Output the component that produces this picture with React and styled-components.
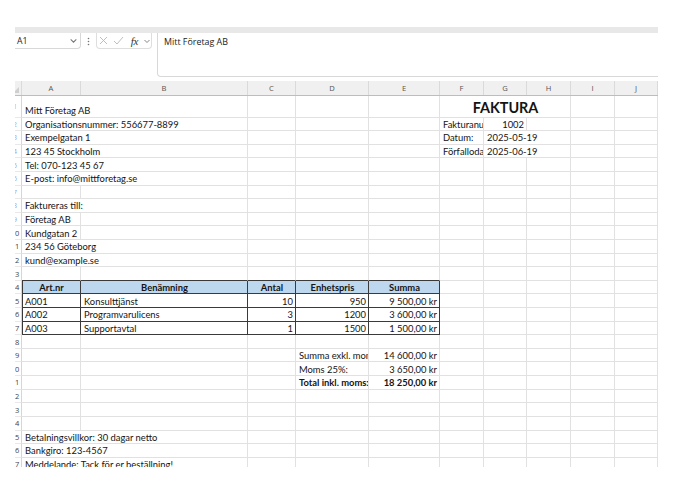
import React from 'react';
import styled, { createGlobalStyle, css } from 'styled-components';

const Global = createGlobalStyle`
  html, body { margin: 0; padding: 0; background: #fff; }
  body { width: 691px; height: 488px; overflow: hidden; font-family: Lato, "Liberation Sans", sans-serif; }
`;

const COLS = '22px 59px 167px 48px 73px 71px 44px 43px 44px 44px 43px';
const LETTERS = ['A', 'B', 'C', 'D', 'E', 'F', 'G', 'H', 'I', 'J'];
const GRID = '#e1e1e1';
const DARK = '#3a3a3a';

const Viewport = styled.div`
  margin: 27px 0 0 15px;
  width: 643px;
  height: 440px;
  overflow: hidden;
`;

const Window = styled.div`
  margin-left: -15px;
  width: 700px;
`;

const Stripe = styled.div`
  height: 6px;
  background: #e8e8e8;
`;

const FormulaRow = styled.div`
  display: flex;
  align-items: flex-start;
  height: 48px;
  font-family: "Open Sans", "Noto Sans", sans-serif;
`;

const NameBox = styled.div`
  margin-left: 6px;
  width: 75px;
  height: 16px;
  box-sizing: border-box;
  border: 1px solid #d8d8d8;
  border-top: none;
  border-radius: 0 0 4px 4px;
  display: flex;
  align-items: center;
  justify-content: space-between;
  padding: 0 2px 0 10px;
  font-size: 8.7px;
  color: #222;
`;

const Dots = styled.div`
  width: 15px;
  height: 16px;
  display: flex;
  align-items: center;
  justify-content: center;
`;

const FxBox = styled.div`
  width: 56px;
  height: 16px;
  box-sizing: border-box;
  border: 1px solid #dedede;
  border-top: none;
  border-radius: 0 0 4px 4px;
  display: flex;
  align-items: center;
`;

const IconSlot = styled.span`
  display: flex;
  align-items: center;
  justify-content: center;
  width: ${p => p.$w}px;
`;

const Fx = styled.span`
  font-family: "Liberation Serif", serif;
  font-style: italic;
  font-size: 11px;
  color: #333;
  width: 16px;
  text-align: center;
  letter-spacing: -0.3px;
`;

const FormulaBox = styled.div`
  margin-left: 5px;
  flex: 1;
  height: 44px;
  box-sizing: border-box;
  border: 1px solid #d8d8d8;
  border-top: none;
  border-radius: 0 0 4px 4px;
  padding: 2px 6px;
  font-size: 8.9px;
  color: #222;
  line-height: 14px;
`;

const Line = styled.div`
  display: grid;
  grid-template-columns: ${COLS};
  height: ${p => p.$h}px;
`;

const HeadLine = styled(Line)`
  background: #f0f0f0;
  border-bottom: 1px solid #bdbdbd;
  box-sizing: border-box;
  font-family: "Open Sans", "Noto Sans", sans-serif;
`;

const ColHead = styled.div`
  border-right: 1px solid #dadada;
  display: flex;
  align-items: center;
  justify-content: center;
  font-size: 7.6px;
  color: #555;
`;

const Corner = styled.div`
  border-right: 1px solid #dadada;
  display: flex;
  align-items: flex-end;
  justify-content: flex-end;
  padding: 0 2px 2px 0;
`;

const RowHead = styled.div`
  box-sizing: border-box;
  border-right: 1px solid #d6d6d6;
  border-bottom: 1px solid #e8e8e8;
  overflow: hidden;
  display: flex;
  align-items: center;
  font-family: "Open Sans", "Noto Sans", sans-serif;
`;

const Num = styled.span`
  flex: none;
  width: 30px;
  text-align: center;
  font-size: 7.5px;
  color: ${p => (p.$faint ? '#8fb0dc' : '#444')};
`;

const Cell = styled.div`
  grid-column: span ${p => p.$span || 1};
  box-sizing: border-box;
  border-right: 1px solid ${p => p.$rc || GRID};
  border-bottom: 1px solid ${p => p.$bc || GRID};
  ${p => p.$left && css`box-shadow: inset 1px 0 ${DARK};`}
  background: ${p => p.$fill || 'transparent'};
  display: flex;
  align-items: ${p => (p.$bottom ? 'flex-end' : 'center')};
  justify-content: ${p => (p.$align === 'right' ? 'flex-end' : p.$align === 'center' ? 'center' : 'flex-start')};
  padding: ${p => (p.$bottom ? '0 2px 1px 3px' : '1px 2px 0 3px')};
  font-size: ${p => p.$size || 9.4}px;
  font-weight: ${p => (p.$bold ? 700 : 400)};
  white-space: nowrap;
  overflow: hidden;
  color: #141414;
`;

const Chevron = ({ size = 7 }) => (
  <svg width={size} height={size} viewBox="0 0 8 8">
    <polyline points="1.5,3 4,5.5 6.5,3" fill="none" stroke="#777" strokeWidth="0.9" />
  </svg>
);

const DATA = {
  1: { 0: { t: 'Mitt Företag AB', span: 2 }, 5: { t: 'FAKTURA', span: 3, align: 'center', bold: true, size: 14.4 } },
  2: { 0: { t: 'Organisationsnummer: 556677-8899', span: 2 }, 5: { t: 'Fakturanummer:' }, 6: { t: '1002', align: 'right' } },
  3: { 0: { t: 'Exempelgatan 1', span: 2 }, 5: { t: 'Datum:' }, 6: { t: '2025-05-19', span: 2 } },
  4: { 0: { t: '123 45 Stockholm', span: 2 }, 5: { t: 'Förfallodatum:' }, 6: { t: '2025-06-19', span: 2 } },
  5: { 0: { t: 'Tel: 070-123 45 67', span: 2 } },
  6: { 0: { t: 'E-post: info@mittforetag.se', span: 2 } },
  8: { 0: { t: 'Faktureras till:', span: 2 } },
  9: { 0: { t: 'Företag AB' } },
  10: { 0: { t: 'Kundgatan 2' } },
  11: { 0: { t: '234 56 Göteborg', span: 2 } },
  12: { 0: { t: 'kund@example.se', span: 2 } },
  14: {
    0: { t: 'Art.nr', align: 'center', bold: true },
    1: { t: 'Benämning', align: 'center', bold: true },
    2: { t: 'Antal', align: 'center', bold: true },
    3: { t: 'Enhetspris', align: 'center', bold: true },
    4: { t: 'Summa', align: 'center', bold: true },
  },
  15: { 0: { t: 'A001' }, 1: { t: 'Konsulttjänst' }, 2: { t: '10', align: 'right' }, 3: { t: '950', align: 'right' }, 4: { t: '9 500,00 kr', align: 'right' } },
  16: { 0: { t: 'A002' }, 1: { t: 'Programvarulicens' }, 2: { t: '3', align: 'right' }, 3: { t: '1200', align: 'right' }, 4: { t: '3 600,00 kr', align: 'right' } },
  17: { 0: { t: 'A003' }, 1: { t: 'Supportavtal' }, 2: { t: '1', align: 'right' }, 3: { t: '1500', align: 'right' }, 4: { t: '1 500,00 kr', align: 'right' } },
  19: { 3: { t: 'Summa exkl. moms:' }, 4: { t: '14 600,00 kr', align: 'right' } },
  20: { 3: { t: 'Moms 25%:' }, 4: { t: '3 650,00 kr', align: 'right' } },
  21: { 3: { t: 'Total inkl. moms:', bold: true }, 4: { t: '18 250,00 kr', align: 'right', bold: true } },
  25: { 0: { t: 'Betalningsvillkor: 30 dagar netto', span: 2 } },
  26: { 0: { t: 'Bankgiro: 123-4567', span: 2 } },
  27: { 0: { t: 'Meddelande: Tack för er beställning!', span: 2 } },
};

function SheetRow({ r }) {
  const data = DATA[r] || {};
  const cells = [];
  const inTable = r >= 14 && r <= 17;
  for (let c = 0; c < 10; ) {
    const d = data[c] || {};
    const span = d.span || 1;
    const boxed = inTable && c <= 4;
    cells.push(
      <Cell
        key={c}
        $span={span}
        $align={d.align}
        $bold={d.bold}
        $size={d.size}
        $bottom={r === 1}
        $rc={boxed ? DARK : undefined}
        $bc={boxed || (r === 13 && c <= 4) ? DARK : undefined}
        $left={boxed && c === 0}
        $fill={r === 14 && c <= 4 ? '#bdd7ee' : undefined}
      >
        {d.t}
      </Cell>
    );
    c += span;
  }
  return (
    <Line $h={r === 1 ? 21.5 : 13.62}>
      <RowHead>
        <Num $faint={r < 10}>{r}</Num>
      </RowHead>
      {cells}
    </Line>
  );
}

export default function App() {
  const rows = Array.from({ length: 27 }, (_, i) => i + 1);
  return (
    <>
      <Global />
      <Viewport>
        <Window>
          <Stripe />
          <FormulaRow>
            <NameBox>
              <span>A1</span>
              <Chevron size={9} />
            </NameBox>
            <Dots>
              <svg width="3" height="9" viewBox="0 0 3 9">
                <circle cx="1.5" cy="1.5" r="0.8" fill="#777" />
                <circle cx="1.5" cy="4.5" r="0.8" fill="#777" />
                <circle cx="1.5" cy="7.5" r="0.8" fill="#777" />
              </svg>
            </Dots>
            <FxBox>
              <IconSlot $w={14}>
                <svg width="9" height="9" viewBox="0 0 9 9">
                  <path d="M1 1 L8 8 M8 1 L1 8" stroke="#b8b8b8" strokeWidth="0.9" fill="none" />
                </svg>
              </IconSlot>
              <IconSlot $w={16}>
                <svg width="11" height="9" viewBox="0 0 11 9">
                  <polyline points="1,5 4,8 10,1" stroke="#b8b8b8" strokeWidth="0.9" fill="none" />
                </svg>
              </IconSlot>
              <Fx>fx</Fx>
              <IconSlot $w={9}>
                <Chevron size={8} />
              </IconSlot>
            </FxBox>
            <FormulaBox>Mitt Företag AB</FormulaBox>
          </FormulaRow>
          <HeadLine $h={15}>
            <Corner>
              <svg width="6" height="6" viewBox="0 0 6 6">
                <polygon points="6,0 6,6 0,6" fill="#cfcfcf" />
              </svg>
            </Corner>
            {LETTERS.map(l => (
              <ColHead key={l}>{l}</ColHead>
            ))}
          </HeadLine>
          {rows.map(r => (
            <SheetRow key={r} r={r} />
          ))}
        </Window>
      </Viewport>
    </>
  );
}
